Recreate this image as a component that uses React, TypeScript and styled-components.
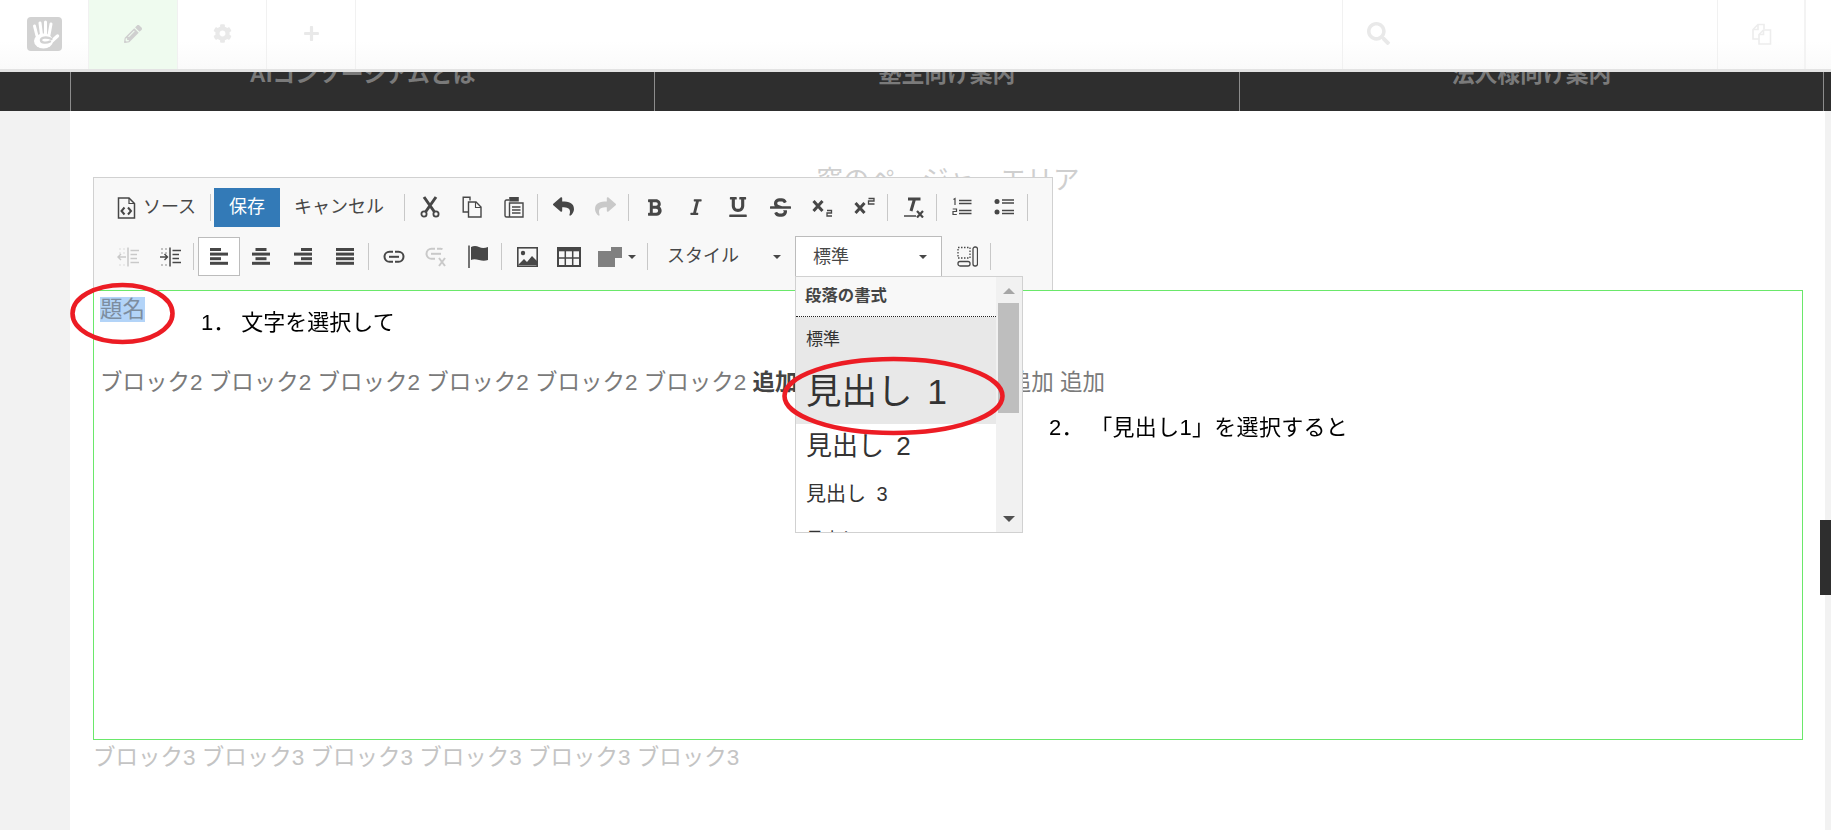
import React from "react";
import styled, { createGlobalStyle } from "styled-components";
import { FaPencilAlt, FaCog, FaPlus, FaSearch, FaReply, FaShare, FaBold, FaItalic, FaUnderline, FaStrikethrough } from "react-icons/fa";

const FONT = `"Liberation Sans", "Noto Sans CJK JP", sans-serif`;

const Global = createGlobalStyle`
  html, body { margin: 0; padding: 0; height: 830px; overflow: hidden; background: #fff; }
  body { font-family: ${FONT}; }
  * { box-sizing: border-box; }
`;

const TopBar = styled.header`
  position: fixed; top: 0; left: 0; right: 0; height: 72px; z-index: 10;
  display: flex; background: linear-gradient(#fff 60%, #fafafa);
  border-bottom: 3px solid #e3e3e3;
`;
const BarCell = styled.div<{ $active?: boolean; $tint?: string }>`
  width: 89px; flex: none; display: flex; align-items: center; justify-content: center;
  border-right: 1px solid #f1f1f1; padding-bottom: 2px;
  background: ${(p) => (p.$active ? "#effbef" : "transparent")};
  color: ${(p) => p.$tint ?? "#e9e9e9"};
`;
const Spacer = styled.div`flex: 1;`;
const SearchCell = styled.div`
  width: 375px; flex: none; display: flex; align-items: center; padding: 0 0 2px 24px;
  border-left: 1px solid #f1f1f1; color: #e9e9e9;
`;
const CopyCell = styled(BarCell)`
  border-left: 1px solid #f1f1f1; border-right: 2px solid #f3f3f3; margin-right: 25px;
`;

const NavBand = styled.nav`
  height: 111px; background: #2e2e2e; padding: 0 7px 0 70px; display: grid;
  grid-template-columns: 584px 585px 585px;
`;
const NavItem = styled.div`
  border-left: 1px solid #8c8c8c; padding-top: 58px; text-align: center;
  font-size: 22.8px; font-weight: 700; line-height: 32px; color: #7a7a7a;
  &:last-child { border-right: 1px solid #8c8c8c; }
`;

const Row = styled.div`display: flex; height: 719px;`;
const Gutter = styled.div<{ $w: number }>`width: ${(p) => p.$w}px; flex: none; background: #f2f2f2;`;
const Main = styled.main`flex: 1; background: #fff; padding: 54px 22px 0 23px;`;
const AreaTitle = styled.div`
  font-size: 26.5px; line-height: 30px; color: #cfcfcf; text-align: center;
`;
const Editable = styled.section`
  position: relative; height: 450px; margin-top: 95px; border: 1px solid #6ae86a; padding: 6px 6px 0;
  color: #7a7a7a; font-size: 22.5px;
`;
const Heading = styled.div`height: 25px; line-height: 25px;`;
const Selected = styled.span`display: inline-block; background: #b3d4f8; color: #7d8da0; height: 25px;`;
const Para = styled.p`margin: 45px 0 0; line-height: 32px; white-space: nowrap;`;
const Bold = styled.b`color: #444;`;
const Block3 = styled.p`margin: 2px 0 0; font-size: 22.5px; line-height: 32px; color: #c4c4c4;`;

const Panel = styled.div`
  position: absolute; left: -1px; bottom: calc(100% + 1px); width: 960px; height: 113px; z-index: 5;
  background: #f8f8f8; border: 1px solid #d1d1d1; border-bottom: 0; padding: 10px 0 0 11px;
  color: #474747; font-size: 18px;
`;
const TbRow = styled.div<{ $second?: boolean }>`
  display: flex; align-items: center; height: 39px;
  ${(p) => p.$second && "margin-top: 10px; padding-left: 2px;"}
`;
const Sep = styled.span`
  flex: none; width: 1px; height: 27px; background: #c8c8c8; margin: 0 4px 0 2px;
`;
const SourceBtn = styled.div`
  width: 103px; flex: none; height: 39px; padding: 0 0 0 12px; display: flex; align-items: center; gap: 7px;
`;
const TextLabel = styled.span`padding-bottom: 5px;`;
const SaveBtn = styled.div`
  width: 66px; flex: none; height: 39px; margin-left: -1px; background: #337ab7; color: #fff;
  display: flex; align-items: center; justify-content: center;
`;
const CancelBtn = styled.div`
  width: 122px; flex: none; height: 39px; padding-left: 14px; display: flex; align-items: center;
`;
const IconBtn = styled.div<{ $active?: boolean; $muted?: boolean; $lift?: number }>`
  width: 42px; height: 39px; flex: none; display: flex; align-items: center; justify-content: center;
  padding-bottom: ${(p) => p.$lift ?? 0}px;
  color: ${(p) => (p.$muted ? "#c9c9c9" : "#474747")};
  ${(p) => p.$active && "background: #fff; outline: 1px solid #bcbcbc; outline-offset: -1px;"}
`;
const MenuBtn = styled.div`
  width: 55px; flex: none; height: 39px; padding-left: 8px; display: flex; align-items: center; gap: 6px; color: #808080;
`;
const Caret = styled.span`
  flex: none; width: 0; height: 0; border: 4.5px solid transparent; border-top-color: #474747; border-bottom: 0;
`;
const Combo = styled.div<{ $open?: boolean }>`
  position: relative; flex: none; width: 147px; display: flex; align-items: center; justify-content: space-between;
  padding: 0 14px 0 17px; height: ${(p) => (p.$open ? "41px" : "39px")};
  ${(p) => (p.$open
    ? "margin: 0 4px 0 0; background: #fff; border: 1px solid #bcbcbc; border-bottom: 0;"
    : "margin-left: -4px; padding-left: 19px;")}
`;
const DropDown = styled.div`
  position: absolute; top: 39px; left: -1px; width: 228px; height: 257px; z-index: 6; overflow: hidden;
  background: #fff; border: 1px solid #d1d1d1; display: flex; color: #333;
`;
const DropList = styled.div`flex: 1; min-width: 0;`;
const DropHead = styled.div`
  height: 40px; padding: 0 0 6px 9px; display: flex; align-items: center; background: #f8f8f8;
  font-size: 16.4px; font-weight: 700; color: #444; border-bottom: 1px dotted #222;
`;
const DropItem = styled.div<{ $size: number; $h: number; $hot?: boolean; $lift: number }>`
  height: ${(p) => p.$h}px; padding: 0 0 ${(p) => p.$lift}px 10px; display: flex; align-items: center; white-space: nowrap;
  font-size: ${(p) => p.$size}px; word-spacing: 5px; background: ${(p) => (p.$hot ? "#e8e8e8" : "#fff")};
  &:first-child { border-bottom: 1px dotted #222; }
`;
const Track = styled.div`
  position: relative; width: 26px; flex: none; background: #f1f1f1;
`;
const Thumb = styled.div`
  position: absolute; top: 26px; left: 2px; width: 21px; height: 110px; background: #bebebe;
`;
const ArrowUp = styled.span`
  position: absolute; top: 11px; left: 7px; border: 6px solid transparent; border-top: 0; border-bottom-color: #a6a6a6; border-bottom-width: 6px;
`;
const ArrowDown = styled.span`
  position: absolute; bottom: 10px; left: 7px; border: 6px solid transparent; border-bottom: 0; border-top-color: #505050;
`;

const Marks = styled.svg`position: fixed; top: 0; left: 0; z-index: 20; pointer-events: none;`;
const Note = styled.div<{ $x: number; $y: number; $track?: number }>`
  position: fixed; left: ${(p) => p.$x}px; top: ${(p) => p.$y}px; z-index: 21;
  font-size: 22px; line-height: 30px; color: #000; white-space: nowrap;
  letter-spacing: ${(p) => p.$track ?? 0}px;
`;
const ScrollTab = styled.div`
  position: fixed; right: 0; top: 520px; width: 11px; height: 75px; background: #2e2e2e; z-index: 9;
`;
const Glyph = styled.svg`display: block; flex: none;`;

type G = { w?: number; h?: number; children: React.ReactNode; vb?: string };
const Ic = ({ w = 21, h = 21, vb, children }: G) => (
  <Glyph width={w} height={h} viewBox={vb ?? `0 0 ${w} ${h}`} fill="none" stroke="currentColor" strokeWidth={1.6}>{children}</Glyph>
);

const Logo = () => (
  <Glyph width={35} height={34} viewBox="0 0 35 34">
    <rect width="35" height="34" rx="4" fill="#d2d2d2" />
    <g fill="none" stroke="#fff" strokeLinecap="round">
      <path d="M7.500 9l2.500 10M13 6l1.500 12M18.500 5v13M24 7l-2 11" strokeWidth="3" />
    </g>
    <ellipse cx="16.500" cy="24" rx="9.500" ry="7.500" fill="#fff" />
    <path d="M25 24l5.500-5" stroke="#fff" strokeWidth="3.400" strokeLinecap="round" />
    <path d="M24.500 22c-5-2.800-11-1.500-10.500 1.500.4 2.500 5.500 2.800 9 1" fill="none" stroke="#d2d2d2" strokeWidth="2.400" strokeLinecap="round" />
  </Glyph>
);
const Files = () => (
  <Ic w={21} h={22}><path d="M13 6V1.500H7L2 6.500V16h6M7 1.500V6.500H2" /><path d="M19.500 7v14H8V11.500L12.500 7zM12.500 7v4.500H8" /></Ic>
);
const Source = () => (
  <Ic w={19} h={22}><path d="M1.500 1h10.500l5.500 5.500V21h-16z" strokeWidth="1.500" /><path d="M12 1v5.500h5.500" strokeWidth="1.200" /><path d="M7.500 10.500l-3 3.500 3 3.500M11 10.500l3 3.500-3 3.500" strokeWidth="2" /></Ic>
);
const Scissors = () => (
  <Ic w={20} h={22}><path d="M4 1l10.500 15M16 1L5.500 16" strokeWidth="3" /><circle cx="4" cy="18" r="2.600" strokeWidth="1.800" /><circle cx="16" cy="18" r="2.600" strokeWidth="1.800" /></Ic>
);
const CopyIc = () => (
  <Ic w={20} h={22}><path d="M8 4.500V1.200H1.200V16H6" strokeWidth="1.400" /><path d="M6.500 6h7.500l5 5v10H6.500z" strokeWidth="1.400" /><path d="M13.500 6v5.500H19" strokeWidth="1.100" /></Ic>
);
const Paste = () => (
  <Ic w={20} h={22}><path d="M5 4H2.500Q1 4 1 5.500v14Q1 21 2.500 21H5" strokeWidth="1.400" /><path d="M5.500 7h13.500v14H5.500z" strokeWidth="1.400" /><path d="M6 1.800h8v3H6z" fill="currentColor" /><path d="M8 11h8.500M8 14h8.500M8 17h8.500" strokeWidth="1.500" /></Ic>
);
const Sub = () => (
  <Ic w={21} h={20}><path d="M1.500 4l9 10M10.500 4l-9 10" strokeWidth="3" /><path d="M15 13.500h4.500v2.500H15v3h5" strokeWidth="1.300" /></Ic>
);
const Sup = () => (
  <Ic w={21} h={20}><path d="M1.500 6l9 10M10.500 6l-9 10" strokeWidth="3" /><path d="M14.500 1.500H20V4h-5.500v3H20.500" strokeWidth="1.300" /></Ic>
);
const ClearFmt = () => (
  <Ic w={21} h={22}><path d="M5 3h12.500M11.500 3L8 15" strokeWidth="3" /><path d="M1 20h12" strokeWidth="1.500" /><path d="M14 15l6 6.500M20 15l-6 6.500" strokeWidth="2.200" /></Ic>
);
const Ol = () => (
  <Ic w={20} h={20}><path d="M7 3.500h12.500M7 6.500h12.500M7 13.500h12.500M7 16.500h12.500" strokeWidth="1.500" /><path d="M1.500 2.500L3 1.500V8" strokeWidth="1.200" /><path d="M.7 12h3.800v2.500H1v3h3.800" strokeWidth="1.200" /></Ic>
);
const Ul = () => (
  <Ic w={20} h={20}><circle cx="3" cy="4.500" r="2.500" fill="currentColor" stroke="none" /><circle cx="3" cy="15" r="2.500" fill="currentColor" stroke="none" /><path d="M8 3h12M8 6h12M8 13.500h12M8 16.500h12" strokeWidth="1.500" /></Ic>
);
const Indent = ({ out }: { out?: boolean }) => (
  <Ic w={22} h={20}>
    <path d="M11 .5v19" strokeWidth="1.500" />
    <path d="M13.500 3.500H22M13.500 7.500H20M13.500 11.500H20M13.500 15.500H22" strokeWidth="1.600" />
    <path d="M3 1.500v1M7 1.500v1M3 17.500v1M7 17.500v1M3 5.500v1M7 5.500v1" strokeWidth="1.200" />
    {out ? <path d="M9 10H1M4 7l-3 3 3 3" strokeWidth="1.400" /> : <path d="M1 10h7.500M5.500 7l3 3-3 3" strokeWidth="1.400" />}
  </Ic>
);
const Align = ({ kind }: { kind: "l" | "c" | "r" | "j" }) => {
  const w = [kind === "j" ? 18 : 11, 18, kind === "j" ? 18 : 11, 18];
  const x = (v: number) => (kind === "c" ? (18 - v) / 2 : kind === "r" ? 18 - v : 0);
  return (
    <Glyph width={18} height={17} viewBox="0 0 18 17" fill="currentColor">
      {w.map((v, i) => <rect key={i} x={x(v)} y={i * 4.6} width={v} height={3} />)}
    </Glyph>
  );
};
const LinkIc = () => (
  <Ic w={22} h={14}><path d="M10 1.800H6.500a5 5 0 0 0 0 10H10M12 1.800h3.500a5 5 0 0 1 0 10H12" strokeWidth="2" /><path d="M6 6.800h10" strokeWidth="2" /></Ic>
);
const Unlink = () => (
  <Ic w={22} h={20}><path d="M10 1.800H6.500a5 5 0 0 0 0 10H10M12 1.800h3.500a5 5 0 0 1 2 .4" strokeWidth="2" /><path d="M6 6.800h10" strokeWidth="2" /><path d="M14 11l6 8M20 11l-6 8" strokeWidth="2" /></Ic>
);
const Flag = () => (
  <Ic w={21} h={23}><path d="M1 .5v22.500" strokeWidth="1.500" /><path d="M3 2q4-2 8 0t9 0v13q-4 1.500-9 0t-8 0z" fill="currentColor" stroke="none" /></Ic>
);
const ImageIc = () => (
  <Ic w={21} h={20}><rect x=".8" y=".8" width="19.400" height="18.400" strokeWidth="1.600" /><circle cx="6" cy="6" r="2.200" fill="currentColor" stroke="none" /><path d="M1 18l6-6 3 3 5-6 5 5v4z" fill="currentColor" stroke="none" /></Ic>
);
const TableIc = () => (
  <Ic w={24} h={20}><rect x="1" y="1" width="22" height="18" strokeWidth="2" /><path d="M1 2.500h22" strokeWidth="3.600" /><path d="M1 11h22M8.300 4v15M15.700 4v15" strokeWidth="1.500" /></Ic>
);
const BlockIc = () => (
  <Glyph width={24} height={20} viewBox="0 0 24 20" fill="currentColor"><rect x="0" y="4" width="17" height="16" /><rect x="13" y="0" width="11" height="11" /></Glyph>
);
const ShowBlocks = () => (
  <Ic w={21} h={21}><path d="M1 1.500h12V12H1z" strokeDasharray="1.500 1.500" strokeWidth="1.300" /><rect x="1" y="15.500" width="12" height="4.500" rx="2" strokeWidth="1.300" /><rect x="16" y="1" width="4.500" height="19" rx="2" strokeWidth="1.300" /></Ic>
);

export default function App() {
  return (
    <>
      <Global />
      <TopBar>
        <BarCell><Logo /></BarCell>
        <BarCell $active $tint="#cfcfcf"><FaPencilAlt size={18} /></BarCell>
        <BarCell><FaCog size={19} /></BarCell>
        <BarCell><FaPlus size={17} /></BarCell>
        <Spacer />
        <SearchCell><FaSearch size={23} /></SearchCell>
        <CopyCell $tint="#ededed"><Files /></CopyCell>
      </TopBar>

      <NavBand>
        <NavItem>AIコンソーシアムとは</NavItem>
        <NavItem>塾生向け案内</NavItem>
        <NavItem>法人様向け案内</NavItem>
      </NavBand>

      <Row>
        <Gutter $w={70} />
        <Main>
          <AreaTitle>窓のページャーエリア</AreaTitle>
          <Editable>
            <Panel>
              <TbRow>
                <SourceBtn><Source /><TextLabel>ソース</TextLabel></SourceBtn>
                <Sep />
                <SaveBtn><TextLabel>保存</TextLabel></SaveBtn>
                <CancelBtn><TextLabel>キャンセル</TextLabel></CancelBtn>
                <Sep />
                <IconBtn $lift={2}><Scissors /></IconBtn>
                <IconBtn $lift={2}><CopyIc /></IconBtn>
                <IconBtn $lift={2}><Paste /></IconBtn>
                <Sep />
                <IconBtn $lift={2}><FaReply size={21} /></IconBtn>
                <IconBtn $lift={2} $muted><FaShare size={21} /></IconBtn>
                <Sep />
                <IconBtn $lift={1}><FaBold size={19} /></IconBtn>
                <IconBtn $lift={1}><FaItalic size={18} /></IconBtn>
                <IconBtn $lift={1}><FaUnderline size={20} /></IconBtn>
                <IconBtn $lift={1}><FaStrikethrough size={21} /></IconBtn>
                <IconBtn $lift={1}><Sub /></IconBtn>
                <IconBtn $lift={1}><Sup /></IconBtn>
                <Sep />
                <IconBtn $lift={1}><ClearFmt /></IconBtn>
                <Sep />
                <IconBtn $lift={2}><Ol /></IconBtn>
                <IconBtn $lift={2}><Ul /></IconBtn>
                <Sep />
              </TbRow>
              <TbRow $second>
                <IconBtn $muted><Indent out /></IconBtn>
                <IconBtn><Indent /></IconBtn>
                <Sep />
                <IconBtn $active><Align kind="l" /></IconBtn>
                <IconBtn><Align kind="c" /></IconBtn>
                <IconBtn><Align kind="r" /></IconBtn>
                <IconBtn><Align kind="j" /></IconBtn>
                <Sep />
                <IconBtn><LinkIc /></IconBtn>
                <IconBtn $muted><Unlink /></IconBtn>
                <IconBtn><Flag /></IconBtn>
                <Sep />
                <IconBtn><ImageIc /></IconBtn>
                <IconBtn><TableIc /></IconBtn>
                <MenuBtn><BlockIc /><Caret /></MenuBtn>
                <Sep />
                <Combo><TextLabel>スタイル</TextLabel><Caret /></Combo>
                <Combo $open>
                  <TextLabel>標準</TextLabel><Caret />
                  <DropDown>
                    <DropList>
                      <DropHead>段落の書式</DropHead>
                      <DropItem $size={17} $h={48} $lift={7} $hot>標準</DropItem>
                      <DropItem $size={35.500} $h={59} $lift={12} $hot>見出し 1</DropItem>
                      <DropItem $size={26} $h={48} $lift={9}>見出し 2</DropItem>
                      <DropItem $size={20} $h={45} $lift={5}>見出し 3</DropItem>
                      <DropItem $size={17.5} $h={40} $lift={0}>見出し 4</DropItem>
                    </DropList>
                    <Track><ArrowUp /><Thumb /><ArrowDown /></Track>
                  </DropDown>
                </Combo>
                <IconBtn><ShowBlocks /></IconBtn>
                <Sep />
              </TbRow>
            </Panel>
            <Heading><Selected>題名</Selected></Heading>
            <Para>
              ブロック2 ブロック2 ブロック2 ブロック2 ブロック2 ブロック2 <Bold>追加</Bold> 追加 追加 追加 追加 追加 追加
            </Para>
          </Editable>
          <Block3>ブロック3 ブロック3 ブロック3 ブロック3 ブロック3 ブロック3</Block3>
        </Main>
        <Gutter $w={6} />
      </Row>

      <ScrollTab />
      <Marks width={1831} height={830} viewBox="0 0 1831 830" fill="none" stroke="#ec1c24" strokeWidth={4.6}>
        <ellipse cx={122.5} cy={313.5} rx={50} ry={28.5} />
        <ellipse cx={893.5} cy={396} rx={109} ry={37} />
      </Marks>
      <Note $x={201} $y={308}>1． 文字を選択して</Note>
      <Note $x={1049} $y={413} $track={0.3}>2． 「見出し1」を選択すると</Note>
    </>
  );
}
